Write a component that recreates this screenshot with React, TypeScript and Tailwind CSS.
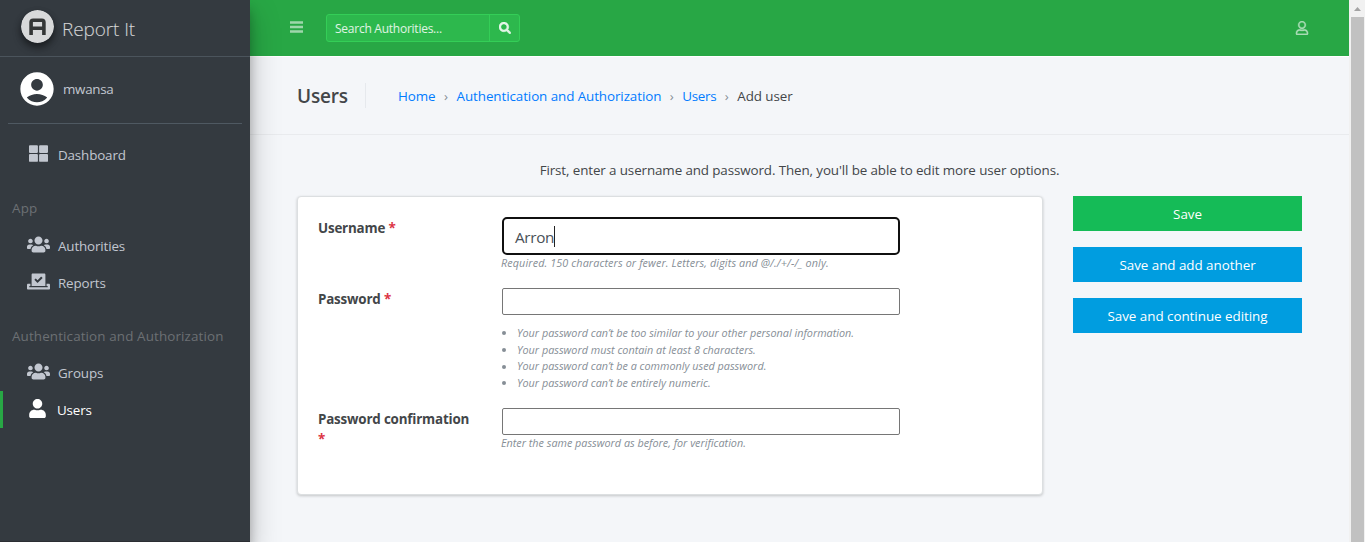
import React from "react";
import { FaRegUser, FaSearch, FaThLarge, FaUser, FaUsers, FaVoteYea } from "react-icons/fa";
import { MdAccountCircle } from "react-icons/md";

type NavProps = {
  icon: React.ReactNode;
  label: string;
  active?: boolean;
};

function NavItem({ icon, label, active }: NavProps) {
  return (
    <a
      className={
        active
          ? "flex h-[37px] items-center border-l-[3px] border-[#28a745] pl-[22px] text-white"
          : "flex h-[37px] items-center pl-[26px] text-[#c2c7d0]"
      }
    >
      <span className="flex w-[25px] justify-center pb-[3px]">{icon}</span>
      <span className="pl-[7px] pt-[2px] tracking-[-0.15px]">{label}</span>
    </a>
  );
}

function Sidebar() {
  return (
    <aside className="relative z-10 flex h-full w-[250px] shrink-0 flex-col border-b border-[#2b2e33] bg-[#343a40] text-[13.4px] shadow-[0_14px_28px_rgba(0,0,0,0.25),0_10px_10px_rgba(0,0,0,0.22)]">
      <div className="flex h-[57px] items-center border-b border-[#4b545c] pl-[21px]">
        <svg viewBox="0 0 33 33" className="mb-[4px] size-[33px] rounded-full shadow-[0_3px_6px_rgba(0,0,0,0.3),0_5px_8px_rgba(0,0,0,0.3)]">
          <circle cx="16.5" cy="16.5" r="16.5" fill="#d8d9da" />
          <path d="M10.1 25V12.2q0-2 2-2h8.8q2 0 2 2V25M10.1 18.2h12.8" fill="none" stroke="#343636" strokeWidth="3.6" />
        </svg>
        <span className="pl-2 pt-[2px] text-[19px] font-light tracking-[-0.1px] text-white/80">Report It</span>
      </div>
      <div className="mx-2 flex h-[67px] items-center border-b border-[#4f5962] pb-[2px] pl-[9px] text-[#c2c7d0]">
        <MdAccountCircle className="size-[40px] text-white" />
        <span className="pl-[6px] tracking-[-0.3px]">mwansa</span>
      </div>
      <nav className="flex flex-col pt-[12px]">
        <NavItem icon={<FaThLarge size={19} />} label="Dashboard" />
        <div className="flex h-[54px] items-end pb-[9px] pl-3 tracking-[0.2px] text-[#6c7074]">App</div>
        <NavItem icon={<FaUsers size={23} />} label="Authorities" />
        <NavItem icon={<FaVoteYea size={23} />} label="Reports" />
        <div className="flex h-[53px] items-end whitespace-nowrap pb-[8px] pl-3 tracking-[0.13px] text-[#6c7074]">
          Authentication and Authorization
        </div>
        <NavItem icon={<FaUsers size={23} />} label="Groups" />
        <NavItem active icon={<FaUser size={19} />} label="Users" />
      </nav>
    </aside>
  );
}

function Topbar() {
  return (
    <header className="flex h-[56px] items-center bg-[#28a745] pl-[40px] pr-[40px]">
      <svg viewBox="0 0 13 12" className="mb-[2px] h-3 w-[13px] text-white/55">
        <path d="M0 1.5h13M0 6h13M0 10.5h13" stroke="currentColor" strokeWidth="2.6" />
      </svg>
      <div className="ml-[23px] flex h-[28px] w-[194px] rounded-[3px] border border-[#34ce57] bg-[#2db84d] text-white/85">
        <div className="flex w-[163px] items-center border-r border-[#34ce57] pl-2 pt-[2px] text-[12px] tracking-[-0.25px]">Search Authorities...</div>
        <div className="flex flex-1 items-center justify-center">
          <FaSearch size={12} stroke="currentColor" strokeWidth={20} />
        </div>
      </div>
      <FaRegUser size={14} stroke="currentColor" strokeWidth={12} className="ml-auto text-white/55" />
    </header>
  );
}

function Separator() {
  return <span className="w-[21px] text-center text-[#868e96]">›</span>;
}

function Breadcrumbs() {
  return (
    <div className="flex h-[79px] items-center border-y border-b-[#e9ebee] border-t-white pl-[47px] text-[13.4px]">
      <h1 className="flex h-[25px] w-[69px] items-center border-r border-[#e6e9ed] pt-[2px] text-[19px] font-semibold tracking-[-0.2px] text-[#434649]">Users</h1>
      <div className="flex items-center whitespace-nowrap pl-[32px] pt-[2px] tracking-[-0.08px] text-[#007bff]">
        <span>Home</span>
        <Separator />
        <span>Authentication and Authorization</span>
        <Separator />
        <span className="tracking-[-0.3px]">Users</span>
        <Separator />
        <span className="text-[#434649]">Add user</span>
      </div>
    </div>
  );
}

function Label({ children }: { children: React.ReactNode }) {
  return (
    <div className="mr-[24px] w-[160px] shrink-0 pt-[1px] text-[13.4px] font-bold leading-5 tracking-[-0.19px] text-[#434649]">
      {children} <span className="text-[#dc3545]">*</span>
    </div>
  );
}

const hints = [
  "Your password can’t be too similar to your other personal information.",
  "Your password must contain at least 8 characters.",
  "Your password can’t be a commonly used password.",
  "Your password can’t be entirely numeric.",
];

function UserForm() {
  return (
    <section className="flex h-[299px] w-[746px] flex-col rounded-[4px] border border-[#dcdfe1] bg-white pl-5 pt-[20px] shadow-[0_1px_3px_rgba(0,0,0,0.2)]">
      <div className="flex h-[71px]">
        <Label>Username</Label>
        <div>
          <div className="flex h-[38px] w-[398px] items-center rounded-[5px] border-2 border-[#101010] pl-[11px] text-[15.3px] text-[#495057]">
            <span className="pt-[2px] tracking-[-0.35px]">Arron</span>
            <span className="h-[21px] w-px bg-[#222]" />
          </div>
          <p className="ml-[-1px] whitespace-nowrap text-[10.8px] italic leading-[15px] tracking-[0.11px] text-[#868e96]">Required. 150 characters or fewer. Letters, digits and @/./+/-/_ only.</p>
        </div>
      </div>
      <div className="flex h-[120px]">
        <Label>Password</Label>
        <div>
          <div className="h-[27px] w-[398px] rounded-[2px] border border-[#767676]" />
          <ul className="pt-[10px] text-[10.8px] italic leading-[16.7px] tracking-[0.01px] text-[#868e96]">
            {hints.map((h) => (
              <li key={h} className="flex items-center whitespace-nowrap">
                <span className="mr-[11px] size-1 rounded-full bg-[#868e96]" />
                <span>{h}</span>
              </li>
            ))}
          </ul>
        </div>
      </div>
      <div className="flex">
        <Label>Password confirmation</Label>
        <div>
          <div className="h-[27px] w-[398px] rounded-[2px] border border-[#767676]" />
          <p className="ml-[-1px] whitespace-nowrap text-[10.8px] italic leading-[15px] text-[#868e96]">Enter the same password as before, for verification.</p>
        </div>
      </div>
    </section>
  );
}

function Actions() {
  return (
    <div className="flex w-[229px] flex-col gap-4 text-[13.4px] tracking-[-0.03px] text-white">
      <button className="h-[35px] bg-[#15bb57] pt-[2px]">Save</button>
      <button className="h-[35px] bg-[#009de0] pt-[2px]">Save and add another</button>
      <button className="h-[35px] bg-[#009de0] pt-[2px]">Save and continue editing</button>
    </div>
  );
}

function Scrollbar() {
  return (
    <div className="flex h-full w-4 shrink-0 flex-col items-center bg-[#f1f1f1]">
      <div className="flex h-[17px] items-center justify-center">
        <svg viewBox="0 0 7 4" className="h-1 w-[7px]"><path d="M0 4L3.5 0L7 4Z" fill="#a3a3a3" /></svg>
      </div>
      <div className="w-[13px] flex-1 bg-[#c1c1c1]" />
    </div>
  );
}

export default function App() {
  return (
    <div className="flex h-[542px] w-[1365px] overflow-hidden bg-[#f4f6f9] font-['Open_Sans',sans-serif]">
      <Sidebar />
      <main className="flex w-[1099px] shrink-0 flex-col">
        <Topbar />
        <Breadcrumbs />
        <p className="flex h-[61px] items-center justify-center pt-[8px] text-[13.4px] leading-5 tracking-[-0.11px] text-[#434649]">
          First, enter a username and password. Then, you'll be able to edit more user options.
        </p>
        <div className="flex gap-[30px] pl-[47px]">
          <UserForm />
          <Actions />
        </div>
      </main>
      <Scrollbar />
    </div>
  );
}
